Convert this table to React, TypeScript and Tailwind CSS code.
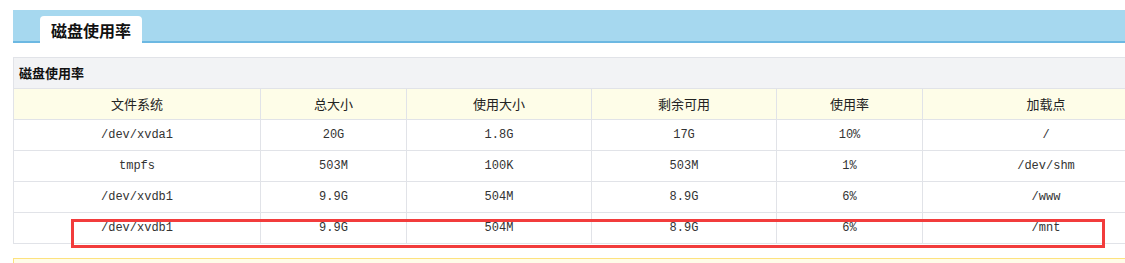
const cols = [
  "w-[247px]",
  "w-[146px]",
  "w-[185px]",
  "w-[185px]",
  "w-[146px]",
  "w-[247px]",
];

const head = ["文件系统", "总大小", "使用大小", "剩余可用", "使用率", "加载点"];

const rows = [
  ["/dev/xvda1", "20G", "1.8G", "17G", "10%", "/"],
  ["tmpfs", "503M", "100K", "503M", "1%", "/dev/shm"],
  ["/dev/xvdb1", "9.9G", "504M", "8.9G", "6%", "/www"],
  ["/dev/xvdb1", "9.9G", "504M", "8.9G", "6%", "/mnt"],
];

const cjk = { fontFamily: '"Noto Sans CJK SC", "Noto Sans", sans-serif' };
const mono = { fontFamily: '"Liberation Mono", "DejaVu Sans Mono", monospace' };

export default function App() {
  return (
    <div className="w-[1182px] bg-white pl-[13px] pt-[10px]">
      <div className="flex h-[33px] items-end border-b-2 border-[#6cb8e2] bg-[#a6d8ef] pl-[27px]">
        <div
          className="relative top-[2px] flex h-[27px] items-center rounded-t-[4px] bg-white px-[11px] text-[16px] font-bold text-[#111]"
          style={cjk}
        >
          磁盘使用率
        </div>
      </div>

      <div className="relative mt-[14px] border-l border-t border-[#e1e3e8]">
        <div
          className="flex h-[31px] items-center border-b border-[#e1e3e8] bg-[#f2f3f5] pl-[5px] text-[13px] font-bold text-[#111]"
          style={cjk}
        >
          磁盘使用率
        </div>
        <div className="flex h-[31px] border-b border-[#e1e3e8] bg-[#fefde8]" style={cjk}>
          {head.map((h, i) => (
            <div
              key={h}
              className={`${cols[i]} flex items-center justify-center border-r border-[#e1e3e8] text-[13px] text-[#222]`}
            >
              {h}
            </div>
          ))}
        </div>
        {rows.map((r, ri) => (
          <div key={ri} className="flex h-[31px] border-b border-[#e1e3e8]" style={mono}>
            {r.map((c, i) => (
              <div
                key={i}
                className={`${cols[i]} flex items-center justify-center border-r border-[#e1e3e8] text-[12px] text-[#333]`}
              >
                {c}
              </div>
            ))}
          </div>
        ))}

        {/* highlight around the last row */}
        <div className="absolute left-[57px] top-[161px] h-[29px] w-[1034px] border-[3px] border-[#f23c3c]" />
      </div>

      <div className="mt-[14px] h-[20px] border border-[#fde27e] bg-[#fffce8]" />
    </div>
  );
}
